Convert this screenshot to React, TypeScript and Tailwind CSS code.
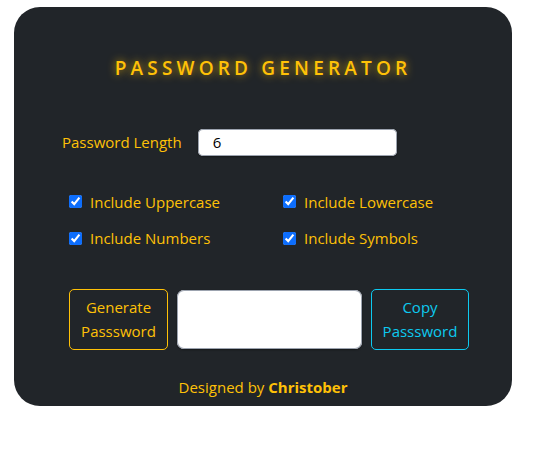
import { useState } from 'react';

const options = [
  ['Include Uppercase', 'Include Lowercase'],
  ['Include Numbers', 'Include Symbols'],
];

export default function App() {
  const [length, setLength] = useState('6');

  return (
    <div className="min-h-screen bg-white pl-[14px] pt-[7px]" style={{ fontFamily: '"Open Sans", "Noto Sans", sans-serif' }}>
      <div className="flex h-[399px] w-[498px] flex-col items-center rounded-[26px] bg-[#212529] text-[#ffc107]">
        <h1 className="mt-[47px] text-[19px] font-semibold tracking-[0.22em] [text-shadow:0_0_8px_rgba(255,193,7,0.75)]">
          PASSWORD GENERATOR
        </h1>

        <div className="mt-[46px] flex w-full items-center pl-[48px]">
          <label className="text-[15px]">Password Length</label>
          <input
            value={length}
            onChange={(e) => setLength(e.target.value)}
            className="ml-[16px] h-[27px] w-[199px] rounded-[5px] bg-white px-[15px] text-[15px] text-black shadow-[inset_0_0_0_1px_#9ca3af,0_1px_2px_rgba(0,0,0,0.4)] outline-none"
          />
        </div>

        <div className="mt-[35px] flex w-full flex-col gap-[14px] pl-[55px]">
          {options.map((row) => (
            <div key={row[0]} className="flex">
              {row.map((label) => (
                <label key={label} className="flex w-[214px] items-center gap-[8px] text-[15px]">
                  <input type="checkbox" defaultChecked className="h-[13px] w-[13px] accent-[#0d6efd]" />
                  {label}
                </label>
              ))}
            </div>
          ))}
        </div>

        <div className="mt-[39px] flex w-full items-center gap-[9px] pl-[55px]">
          <button className="h-[61px] w-[99px] rounded-[5px] border border-solid border-[#ffc107] text-[15px] leading-[24px] text-[#ffc107]">
            Generate
            <br />
            Passsword
          </button>
          <div className="h-[59px] w-[185px] rounded-[7px] bg-white shadow-[inset_0_0_0_1px_#9ca3af,0_1px_2px_rgba(0,0,0,0.4)]" />
          <button className="h-[61px] w-[98px] rounded-[5px] border border-solid border-[#0dcaf0] text-[15px] leading-[24px] text-[#0dcaf0]">
            Copy
            <br />
            Passsword
          </button>
        </div>

        <p className="mt-[26px] text-[15px]">
          Designed by <span className="font-bold">Christober</span>
        </p>
      </div>
    </div>
  );
}
